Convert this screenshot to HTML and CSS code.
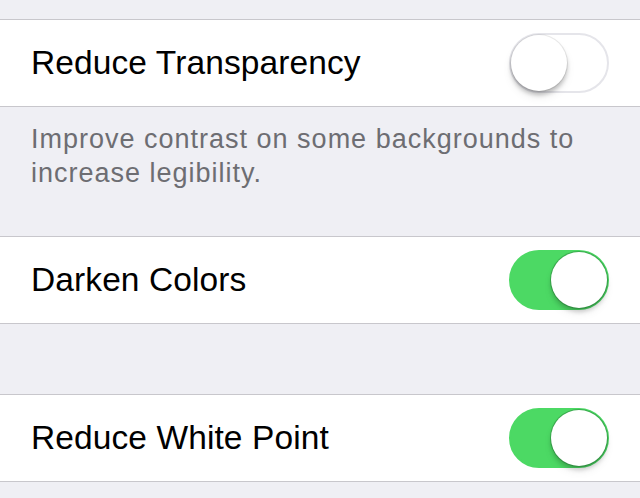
FILE: index.html
```html
<!DOCTYPE html>
<html>
<head>
<meta charset="utf-8">
<link rel="stylesheet" href="styles.css">
</head>
<body>
<div class="page">
  <div class="gap-top"></div>
  <div class="group">
    <div class="row">
      <span class="label">Reduce Transparency</span>
      <span class="switch"><span class="knob"></span></span>
    </div>
  </div>
  <div class="footer">Improve contrast on some backgrounds to increase legibility.</div>
  <div class="group">
    <div class="row">
      <span class="label">Darken Colors</span>
      <span class="switch on"><span class="knob"></span></span>
    </div>
  </div>
  <div class="gap-mid"></div>
  <div class="group">
    <div class="row">
      <span class="label">Reduce White Point</span>
      <span class="switch on"><span class="knob"></span></span>
    </div>
  </div>
</div>
</body>
</html>
```
FILE: styles.css
```css
html, body {
  margin: 0;
  padding: 0;
  background: #efeff4;
  font-family: "Liberation Sans", Arial, sans-serif;
}
.page {
  width: 640px;
  height: 498px;
  overflow: hidden;
  display: flex;
  flex-direction: column;
}
.gap-top { height: 19px; flex: none; }
.gap-mid { height: 70px; flex: none; }
.group {
  flex: none;
  background: #fff;
  border-top: 1px solid #c8c7cc;
  border-bottom: 1px solid #c8c7cc;
}
.row {
  height: 86px;
  display: flex;
  align-items: center;
  justify-content: space-between;
  padding: 0 31px 0 31px;
}
.label {
  font-size: 33.5px;
  color: #000;
  letter-spacing: 0.1px;
}
.footer {
  flex: none;
  height: 129px;
  box-sizing: border-box;
  padding: 15px 30px 0 31px;
  font-size: 27px;
  line-height: 34px;
  letter-spacing: 1px;
  color: #6d6d72;
}
.switch {
  position: relative;
  width: 100px;
  height: 60px;
  box-sizing: border-box;
  border-radius: 30px;
  border: 2px solid #e5e5ea;
  background: #fff;
  flex: none;
}
.switch .knob {
  position: absolute;
  top: 0;
  left: 0;
  width: 56px;
  height: 56px;
  border-radius: 50%;
  background: #fff;
  box-shadow: 0 0 0 1px rgba(0,0,0,0.08), 0 4px 4px rgba(0,0,0,0.22), 0 6px 10px rgba(0,0,0,0.08);
}
.switch.on {
  background: #4cd964;
  border-color: #4cd964;
}
.switch.on .knob {
  left: auto;
  right: 0;
  box-shadow: 0 0 0 1px rgba(30,90,40,0.35), 0 4px 4px rgba(0,0,0,0.18), 0 6px 10px rgba(0,0,0,0.06);
}
```
